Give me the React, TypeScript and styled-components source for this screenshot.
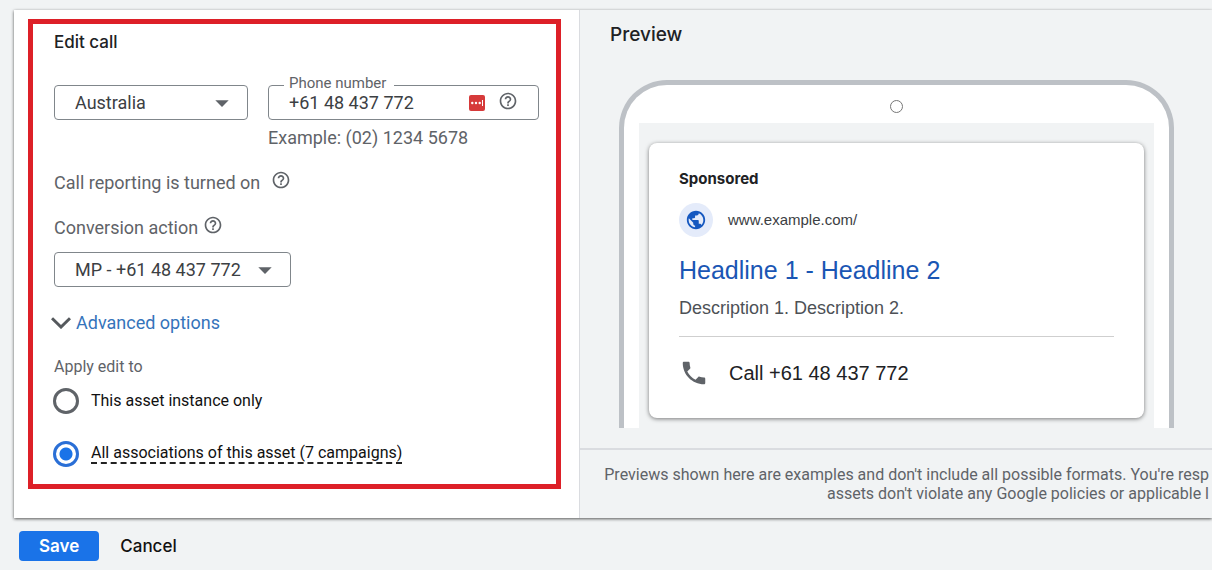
import React from "react";
import styled, { createGlobalStyle } from "styled-components";
import { MdArrowDropDown, MdHelpOutline, MdPhone, MdPublic } from "react-icons/md";

const GlobalStyle = createGlobalStyle`
  * { box-sizing: border-box; }
  body {
    margin: 0;
    background: #f1f3f4;
    color: #202124;
    font-family: Roboto, "Liberation Sans", sans-serif;
    font-size: 18px;
    line-height: 24px;
  }
  button, input, select { font: inherit; color: inherit; }
`;

const Page = styled.main`
  padding: 10px 0 9px 14px;
  overflow-x: hidden;
`;

const Panel = styled.section`
  display: grid;
  grid-template-columns: minmax(0, 566fr) minmax(0, 632fr);
  box-shadow: 0 1px 3px rgba(0, 0, 0, 0.65);
  clip-path: inset(-3px 0 -6px -4px);
`;

const EditColumn = styled.div`
  background: #fff;
  border-right: 1px solid #dadce0;
  padding: 9px 18px 29px 14px;
`;

const Highlight = styled.div`
  border: 5px solid #dd2028;
  padding: 6px 17px 17px 21px;
`;

const Title = styled.h2`
  margin: 0;
  font-family: Inter, Roboto, sans-serif;
  font-size: 17px;
  font-weight: 500;
  line-height: 24px;
`;

const PreviewTitle = styled(Title)`
  font-size: 19px;
  padding-left: 30px;
`;

const FieldRow = styled.div`
  display: flex;
  align-items: flex-start;
  gap: 20px;
  margin-top: 31px;
`;

const SelectBox = styled.div<{ $width: number }>`
  position: relative;
  flex: none;
  width: ${(p) => p.$width}px;
  max-width: 100%;
  height: 35px;
  color: #3c4043;

  select {
    appearance: none;
    width: 100%;
    height: 100%;
    padding: 0 44px 0 20px;
    border: 1px solid #80868b;
    border-radius: 4px;
    background: #fff;
  }
  svg {
    position: absolute;
    right: 10px;
    top: 2px;
    color: #5f6368;
    pointer-events: none;
  }
`;

const PhoneField = styled.div`
  flex: 1;
  min-width: 0;
`;

const PhoneBox = styled.div`
  position: relative;
  display: flex;
  align-items: center;
  height: 35px;
  padding: 0 20px;
  border: 1px solid #80868b;
  border-radius: 4px;
  color: #5f6368;

  label {
    position: absolute;
    left: 15px;
    top: -13px;
    padding: 0 8px 0 5px;
    background: #fff;
    font-size: 15px;
    line-height: 20px;
  }
  input {
    flex: 1;
    min-width: 0;
    padding: 0;
    border: 0;
    outline: 0;
    background: none;
    color: #3c4043;
  }
`;

const BoxIcons = styled.span`
  display: flex;
  align-items: flex-start;
  gap: 13px;
  padding-bottom: 4px;

  svg:first-child { margin-top: 4px; }
`;

const Hint = styled.p`
  margin: 8px 0 0;
  line-height: 20px;
  color: #5f6368;
`;

const InfoLine = styled.div<{ $gap: number }>`
  display: flex;
  align-items: flex-start;
  gap: ${(p) => p.$gap}px;
  color: #5f6368;

  span, label { padding-top: 1px; }
`;

const InfoLines = styled.div`
  display: flex;
  flex-direction: column;
  gap: 20px;
  margin: 22px 0 12px;
`;

const Advanced = styled.button`
  display: flex;
  align-items: center;
  gap: 5px;
  margin: 24px 0 0 -3px;
  padding: 0;
  border: 0;
  background: none;
  color: #3574bb;
  cursor: pointer;
`;

const RadioGroup = styled.fieldset`
  display: flex;
  flex-direction: column;
  gap: 27px;
  margin: 20px 0 0;
  padding: 0;
  border: 0;
  font-size: 16px;

  legend {
    margin-bottom: 9px;
    padding: 0;
    color: #5f6368;
  }
`;

const RadioLabel = styled.label`
  display: flex;
  align-items: center;
  gap: 12px;
  height: 26px;
  color: #111;

  input {
    appearance: none;
    flex: none;
    width: 26px;
    height: 26px;
    margin: 0 0 0 -1px;
    border: 3px solid #5f6368;
    border-radius: 50%;
    background: #fff;
  }
  input:checked {
    border-color: #2a6fd6;
    background: radial-gradient(circle, #1a73e8 6px, #fff 7px);
  }
`;

const Dashed = styled.span`
  line-height: 18px;
  border-bottom: 2px dashed #222;
`;

const PreviewColumn = styled.div`
  display: flex;
  flex-direction: column;
  padding-top: 13px;
  background: #f1f3f4;
`;

const PhoneFrame = styled.div`
  display: flex;
  flex-direction: column;
  align-items: center;
  margin: 33px 38px 20px 39px;
  padding: 15px 15px 0;
  border: 5px solid #bdc1c6;
  border-bottom: 0;
  border-radius: 48px 48px 0 0;
  background: #fff;
`;

const Camera = styled.div`
  width: 13px;
  height: 13px;
  border: 1px solid #777;
  border-radius: 50%;
`;

const Screen = styled.div`
  align-self: stretch;
  margin-top: 10px;
  padding: 20px 10px 10px;
  background: #f1f3f4;
`;

const AdCard = styled.article`
  padding: 26px 30px 30px;
  border-radius: 8px;
  background: #fff;
  box-shadow: 0 1px 4px rgba(0, 0, 0, 0.5);
  font-family: "Liberation Sans", Arial, sans-serif;
`;

const Sponsored = styled.div`
  font-family: Inter, Roboto, sans-serif;
  font-size: 15px;
  font-weight: 700;
  line-height: 20px;
`;

const Site = styled.div`
  display: flex;
  align-items: center;
  gap: 15px;
  margin-top: 14px;
  font-size: 15px;
  color: #3c4043;
`;

const Globe = styled.span`
  display: grid;
  place-items: center;
  width: 34px;
  height: 34px;
  border-radius: 50%;
  background: #e4ebfa;
  color: #1558c0;
`;

const Headline = styled.a`
  display: block;
  margin-top: 18px;
  font-size: 25px;
  line-height: 30px;
  color: #1a56b4;
  text-decoration: none;
`;

const Description = styled.p`
  margin: 11px 0 0;
  padding-bottom: 16px;
  border-bottom: 1px solid #cfcfcf;
  color: #4d5156;
`;

const CallLine = styled.div`
  display: flex;
  align-items: center;
  gap: 20px;
  margin-top: 21px;
  font-size: 20px;
  line-height: 30px;

  svg { color: #5f6368; }
`;

const Disclaimer = styled.p`
  flex: 1;
  margin: 0;
  padding: 15px 3px 0 0;
  border-top: 2px solid #dadce0;
  font-size: 16px;
  line-height: 19px;
  color: #5f6368;
  text-align: right;
  white-space: nowrap;
`;

const Actions = styled.div`
  display: flex;
  gap: 21px;
  margin-top: 13px;
  padding-left: 5px;
`;

const Button = styled.button<{ $primary?: boolean }>`
  height: 30px;
  padding: 0 ${(p) => (p.$primary ? 20 : 0)}px;
  border: 0;
  border-radius: 4px;
  background: ${(p) => (p.$primary ? "#1a73e8" : "transparent")};
  color: ${(p) => (p.$primary ? "#fff" : "#111")};
  font-family: Inter, Roboto, sans-serif;
  font-size: 17px;
  font-weight: ${(p) => (p.$primary ? 600 : 500)};
  cursor: pointer;
`;

const PasswordIcon = () => (
  <svg width="16" height="16" viewBox="0 0 16 16" aria-hidden="true">
    <rect width="16" height="16" rx="2" fill="#d63a3a" />
    <circle cx="3.3" cy="8" r="1.2" fill="#fff" />
    <circle cx="7" cy="8" r="1.2" fill="#fff" />
    <circle cx="10.7" cy="8" r="1.2" fill="#fff" />
    <rect x="13" y="5" width="1" height="6" fill="#fff" />
  </svg>
);

const Chevron = () => (
  <svg width="20" height="12" viewBox="0 0 20 12" fill="none" aria-hidden="true">
    <path d="M1 1.2 10 10 19 1.2" stroke="#55595d" strokeWidth="3" />
  </svg>
);

export default function App() {
  return (
    <>
      <GlobalStyle />
      <Page>
        <Panel>
          <EditColumn>
            <Highlight>
              <Title>Edit call</Title>
              <FieldRow>
                <SelectBox $width={194}>
                  <select aria-label="Country" defaultValue="Australia">
                    <option>Australia</option>
                  </select>
                  <MdArrowDropDown size={32} />
                </SelectBox>
                <PhoneField>
                  <PhoneBox>
                    <label htmlFor="phone">Phone number</label>
                    <input id="phone" type="tel" defaultValue="+61 48 437 772" />
                    <BoxIcons>
                      <PasswordIcon />
                      <MdHelpOutline size={20} />
                    </BoxIcons>
                  </PhoneBox>
                  <Hint>Example: (02) 1234 5678</Hint>
                </PhoneField>
              </FieldRow>
              <InfoLines>
                <InfoLine $gap={11}>
                  <span>Call reporting is turned on</span>
                  <MdHelpOutline size={20} />
                </InfoLine>
                <InfoLine $gap={5}>
                  <label htmlFor="conversion">Conversion action</label>
                  <MdHelpOutline size={20} />
                </InfoLine>
              </InfoLines>
              <SelectBox $width={237}>
                <select id="conversion" defaultValue="MP - +61 48 437 772">
                  <option>MP - +61 48 437 772</option>
                </select>
                <MdArrowDropDown size={32} />
              </SelectBox>
              <Advanced type="button">
                <Chevron />
                Advanced options
              </Advanced>
              <RadioGroup>
                <legend>Apply edit to</legend>
                <RadioLabel>
                  <input type="radio" name="scope" />
                  <span>This asset instance only</span>
                </RadioLabel>
                <RadioLabel>
                  <input type="radio" name="scope" defaultChecked />
                  <Dashed>All associations of this asset (7 campaigns)</Dashed>
                </RadioLabel>
              </RadioGroup>
            </Highlight>
          </EditColumn>
          <PreviewColumn>
            <PreviewTitle>Preview</PreviewTitle>
            <PhoneFrame>
              <Camera />
              <Screen>
                <AdCard>
                  <Sponsored>Sponsored</Sponsored>
                  <Site>
                    <Globe>
                      <MdPublic size={22} />
                    </Globe>
                    www.example.com/
                  </Site>
                  <Headline href="#">Headline 1 - Headline 2</Headline>
                  <Description>Description 1. Description 2.</Description>
                  <CallLine>
                    <MdPhone size={30} />
                    Call +61 48 437 772
                  </CallLine>
                </AdCard>
              </Screen>
            </PhoneFrame>
            <Disclaimer>
              Previews shown here are examples and don't include all possible formats. You're resp
              <br />
              assets don't violate any Google policies or applicable l
            </Disclaimer>
          </PreviewColumn>
        </Panel>
        <Actions>
          <Button type="button" $primary>
            Save
          </Button>
          <Button type="button">Cancel</Button>
        </Actions>
      </Page>
    </>
  );
}
